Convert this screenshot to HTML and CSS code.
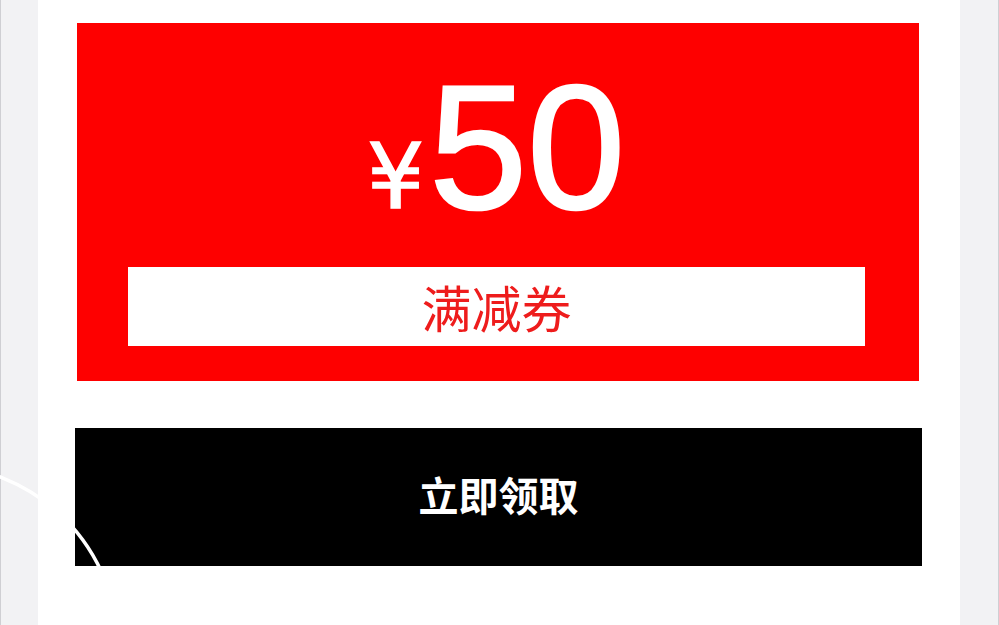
FILE: index.html
```html
<!DOCTYPE html>
<html lang="zh">
<head>
<meta charset="utf-8">
<link rel="stylesheet" href="styles.css">
</head>
<body>
<div class="screen">
  <div class="side side-left"></div>
  <main class="panel">
    <section class="coupon">
      <div class="price">
        <span class="currency">¥</span><span class="amount">50</span>
      </div>
      <div class="label">满减券</div>
    </section>
    <button class="claim">立即领取</button>
  </main>
  <div class="side side-right"></div>
  <svg class="arc" width="999" height="625" viewBox="0 0 999 625">
    <circle cx="-65" cy="648" r="183" fill="none" stroke="#ffffff" stroke-width="3.5"/>
  </svg>
</div>
</body>
</html>
```
FILE: styles.css
```css
html, body {
  margin: 0;
  padding: 0;
}
body {
  background: #f2f2f4;
  font-family: "Liberation Sans", "Noto Sans CJK SC", sans-serif;
}
.screen {
  position: relative;
  display: flex;
  width: 999px;
  height: 625px;
  overflow: hidden;
}
.side {
  background: #f2f2f4;
}
.side-left {
  width: 37px;
  border-left: 1px solid #cfcfd3;
}
.side-right {
  flex: 1;
  border-right: 1px solid #cfcfd3;
}
.panel {
  width: 922px;
  background: #ffffff;
  display: flex;
  flex-direction: column;
}
.coupon {
  margin: 23px 0 0 39px;
  width: 842px;
  height: 358px;
  box-sizing: border-box;
  background: #fe0000;
  padding-top: 36px;
  display: flex;
  flex-direction: column;
}
.price {
  display: flex;
  justify-content: center;
  align-items: baseline;
  color: #ffffff;
  line-height: 1;
  height: 176px;
  padding-right: 4px;
}
.currency {
  font-family: "DejaVu Sans", sans-serif;
  font-size: 90px;
  margin-right: 5px;
  -webkit-text-stroke: 1.5px #ffffff;
}
.amount {
  font-size: 176px;
  -webkit-text-stroke: 2.5px #ffffff;
}
.label {
  margin: 32px 0 0 51px;
  width: 737px;
  height: 79px;
  background: #ffffff;
  color: #ee1c1c;
  font-family: "Noto Sans CJK SC", sans-serif;
  font-size: 50px;
  line-height: 79px;
  text-align: center;
}
.claim {
  margin: 47px 0 0 37px;
  width: 847px;
  height: 138px;
  border: none;
  padding: 0 0 6px 0;
  background: #000000;
  color: #ffffff;
  font-family: "Noto Sans CJK SC", sans-serif;
  font-weight: 600;
  font-size: 40px;
  text-align: center;
}
.arc {
  position: absolute;
  left: 0;
  top: 0;
  pointer-events: none;
}
```
